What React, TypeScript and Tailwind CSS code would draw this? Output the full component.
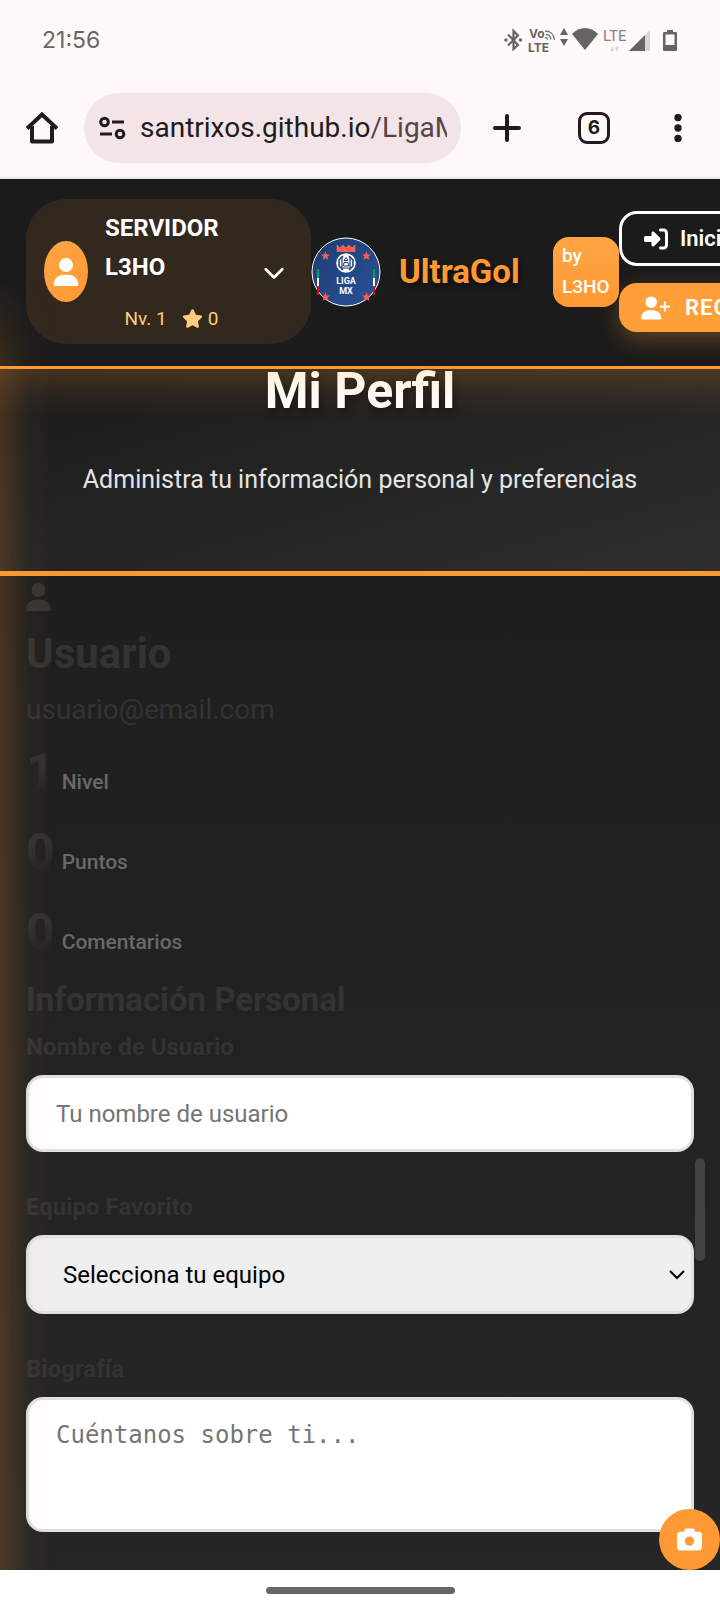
import type { ReactNode } from "react";
import {
  FaCamera,
  FaChevronDown,
  FaRightToBracket,
  FaStar,
  FaUser,
  FaUserPlus,
} from "react-icons/fa6";

function StatusIcons() {
  return (
    <svg width="176" height="32" viewBox="0 -2 176 32" aria-hidden="true" fill="#666461">
      <g fill="none" stroke="#666461" strokeWidth="2.2">
        <path d="M4 8.500 14 19 9.500 23V5L14 9.500 4 19.500" />
      </g>
      <circle cx="2" cy="14" r="1.700" />
      <circle cx="16.500" cy="14" r="1.700" />
      <text x="25" y="12" fontSize="12" fontWeight="700" fontFamily="Inter, sans-serif">Vo</text>
      <text x="24" y="26" fontSize="12" fontWeight="700" fontFamily="Inter, sans-serif">LTE</text>
      <g fill="none" stroke="#777" strokeWidth="1.300">
        <path d="M41 5c5 0 9 3 9.500 9M42 8.500c3 0 4.500 2 5 5M41 11.500c1.500 0 2.500 1 3 2" />
      </g>
      <path d="M60 2l4 7h-8zM60 20l4-7h-8z" />
      <path d="M68 8c7-8 19-8 26 0L81 24z" />
      <text x="99" y="15" fontSize="15" fill="#858381" fontFamily="Roboto, sans-serif">LTE</text>
      <path d="M108 21v4m-1.500-1.500 1.500 1.500 1.500-1.500M113 25v-4m-1.500 1.500 1.500-1.500 1.500 1.500" fill="none" stroke="#d5d0cf" strokeWidth="1.300" />
      <path d="M125 25 146 4v21z" fill="#dcd4d4" />
      <path d="M125 25 141 9v16z" />
      <path fillRule="evenodd" d="M163 4h6v2h3q1 0 1 1v17q0 1-1 1h-12q-1 0-1-1V7q0-1 1-1h3zM161.500 8.500v10.500h9V8.500z" />
    </svg>
  );
}

function BrowserBar() {
  return (
    <div className="border-b-2 border-[#f3e4e7] bg-[#fff8f8] text-[#221b1d]">
      <div className="flex h-20 items-center justify-between pr-[40px] pl-[42px]">
        <span className="font-[Inter,sans-serif] text-[23px] text-[#686563]">21:56</span>
        <StatusIcons />
      </div>
      <div className="flex items-start pt-[13px] pr-[38px] pb-[14px] pl-[26px]">
        <button type="button" aria-label="Inicio" className="mt-[19px] shrink-0">
          <svg width="32" height="32" viewBox="0 0 32 32" fill="none" stroke="#221b1d" strokeWidth="4" strokeLinejoin="round">
            <path d="M1 16.500 16 2.500l15 14" strokeWidth="4" strokeLinejoin="miter" />
            <path d="M6 14v15.500h20V14" />
          </svg>
        </button>
        <button
          type="button"
          aria-label="santrixos.github.io/LigaMX"
          className="ml-[26px] flex h-[70px] min-w-0 flex-1 items-center rounded-full bg-[#f3e4e7] pr-[14px] pl-[15px]"
        >
          <svg className="shrink-0" width="27" height="24" viewBox="0 0 27 24" fill="none" stroke="#221b1d" strokeWidth="3">
            <circle cx="5.500" cy="6" r="3.800" />
            <path d="M13 6h12M1 18h12" />
            <circle cx="21" cy="18" r="3.800" />
          </svg>
          <span className="ml-[14px] flex-1 overflow-hidden text-left font-[Roboto,sans-serif] text-[28px] whitespace-nowrap">
            santrixos.github.io<span className="text-[#544648]">/LigaM</span>
          </span>
        </button>
        <button type="button" aria-label="Nueva pestaña" className="mt-[21px] ml-[32px] shrink-0">
          <svg width="28" height="28" viewBox="0 0 28 28" stroke="#221b1d" strokeWidth="4" strokeLinecap="round">
            <path d="M14 2v24M2 14h24" />
          </svg>
        </button>
        <button
          type="button"
          aria-label="6 pestañas abiertas"
          className="mt-[19px] ml-[57px] flex size-8 shrink-0 items-center justify-center rounded-[9px] border-[3px] border-[#221b1d] font-[Inter,sans-serif] text-[19px] font-bold"
        >
          6
        </button>
        <button type="button" aria-label="Más opciones" className="mt-[21px] ml-[64px] shrink-0">
          <svg width="8" height="28" viewBox="0 0 8 28" fill="#221b1d">
            <circle cx="4" cy="3.500" r="3.700" />
            <circle cx="4" cy="14" r="3.700" />
            <circle cx="4" cy="24.500" r="3.700" />
          </svg>
        </button>
      </div>
    </div>
  );
}

const STAR = "M0-4.800 1.200-1.500 4.600-1.500 1.900.6 2.900 4 0 2-2.900 4-1.900.6-4.600-1.500-1.200-1.500z";

function LigaLogo() {
  return (
    <svg className="shrink-0" width="70" height="70" viewBox="0 0 70 70" role="img" aria-label="Liga MX">
      <defs>
        <linearGradient id="liga" x1="0" y1="0" x2="1" y2="1">
          <stop offset="0" stopColor="#1e3c72" />
          <stop offset="1" stopColor="#2a5298" />
        </linearGradient>
      </defs>
      <circle cx="35" cy="35" r="34" fill="url(#liga)" stroke="#fff" strokeWidth="1" />
      <path d="M26 8l3 3 3-3 3 3 3-3 3 3 3-3v6.500H26z" fill="#ff5a47" stroke="#ff8a7a" strokeWidth=".5" />
      <circle cx="35" cy="26" r="9.800" fill="#fff" />
      <path d="M32 19l-4 4v6l4 4M38 19l4 4v6l-4 4" fill="none" stroke="#1e3c72" strokeWidth="1.500" />
      <path d="M31 19.500v13M39 19.500v13" stroke="#1e3c72" strokeWidth="1.200" />
      <path d="M35 20.500l2 3h-4zM32.500 29l.5-3.500h4l.5 3.500zM32 31h6" fill="none" stroke="#1e3c72" strokeWidth="1" />
      <text x="35" y="46.500" textAnchor="middle" fill="#fff" fontSize="9" fontWeight="700" fontFamily="Roboto, sans-serif">LIGA</text>
      <text x="35" y="56.500" textAnchor="middle" fill="#fff" fontSize="9" fontWeight="700" fontFamily="Roboto, sans-serif">MX</text>
      {[[14.500, 19], [55.500, 19], [14.500, 60], [55.500, 60]].map(([x, y]) => (
        <path key={`${x}-${y}`} d={STAR} transform={`translate(${x} ${y})`} fill="#ff5f47" />
      ))}
      {[6, 62].map((x) => (
        <g key={x}>
          <path d={`M${x} 32h2v9h-2z`} fill="#00a650" />
          <path d={`M${x} 41h2v8h-2z`} fill="#fff" />
          <path d={`M${x} 49h2v9h-2z`} fill="#e30613" />
        </g>
      ))}
    </svg>
  );
}

function SiteHeader() {
  return (
    <header className="relative flex items-center overflow-hidden border-b-[3px] border-[#ff9933] bg-[#1b1b1b] pt-[20px] pb-[22px] pl-[26px] text-white">
      <button
        type="button"
        className="flex w-[285px] shrink-0 items-center rounded-[40px] bg-[#33281e] pt-[10px] pr-[26px] pb-[10px] pl-[18px] text-left"
      >
        <span className="flex h-[61px] w-[44px] shrink-0 items-center justify-center rounded-[50%] bg-linear-to-br from-[#ffa544] to-[#ff9933]">
          <FaUser className="size-[28px]" />
        </span>
        <span className="ml-[17px] w-[133px]">
          <span className="block text-[24px] leading-[39px] font-bold">SERVIDOR L3HO</span>
          <span className="mt-[16px] flex items-center justify-center text-[19px] leading-[31px] text-[#ffcc80]">
            Nv. 1
            <FaStar className="mr-[5px] ml-[15px] size-[21px]" />0
          </span>
        </span>
        <FaChevronDown className="ml-auto size-[22px]" />
      </button>
      <LigaLogo />
      <a
        href="#inicio"
        className="ml-[18px] w-[154px] shrink-0 text-[33px] font-bold text-[#ff9933] [text-shadow:2px_3px_5px_rgba(0,0,0,0.5)]"
      >
        UltraGol
      </a>
      <span className="w-[66px] shrink-0 rounded-[16px] bg-linear-to-b from-[#ffa544] to-[#ff9933] px-[9px] pt-[3px] pb-[5px] text-[19px] leading-[31px] font-medium">
        by L3HO
      </span>
      <div className="flex shrink-0 flex-col gap-[17px]">
        <button
          type="button"
          className="flex h-[55px] items-center gap-[12px] rounded-[18px] border-[3px] border-white px-[22px] text-[22px] font-semibold"
        >
          <FaRightToBracket className="size-[24px]" />
          Iniciar Sesión
        </button>
        <button
          type="button"
          className="flex h-[49px] items-center gap-[15px] rounded-[18px] bg-[#ff9f38] px-[22px] text-[22px] font-semibold tracking-wider shadow-[0_8px_22px_rgba(255,153,51,0.3)]"
        >
          <FaUserPlus className="h-[24px] w-[29px]" />
          REGISTRARSE
        </button>
      </div>
    </header>
  );
}

function Stat({ value, label }: { value: number; label: string }) {
  return (
    <div className="flex h-20 items-baseline gap-[7px]">
      <span className="bg-linear-to-b from-[#303030] from-40% to-[#222] to-80% bg-clip-text text-[50px] leading-[80px] font-bold text-transparent">
        {value}
      </span>
      <span className="text-[21px] leading-[34px] font-medium text-[#696969]">{label}</span>
    </div>
  );
}

function Field({ id, label, children }: { id: string; label: string; children: ReactNode }) {
  return (
    <div className="mb-[36px] flex flex-col">
      <label htmlFor={id} className="mb-[9px] text-[24px] leading-[38px] font-bold text-[#333]">
        {label}
      </label>
      {children}
    </div>
  );
}

function ProfilePage() {
  return (
    <main className="bg-linear-to-b from-[#1d1d1d] to-[#262626]">
      <section className="relative border-b-[5px] border-[#ff9933] bg-linear-to-br from-[#1b1b1b] to-[#2e2e2e] px-8 pb-[71px] text-center">
        <h1 className="text-[50px] leading-[44px] font-bold text-white [text-shadow:2px_4px_8px_rgba(0,0,0,0.5)]">
          Mi Perfil
        </h1>
        <p className="mt-[47px] text-[25px] leading-[40px] text-[#e5e5e5]">
          Administra tu información personal y preferencias
        </p>
        <div className="pointer-events-none absolute inset-x-0 top-0 h-12 bg-linear-to-b from-[#ff9933]/18 via-[#ff9933]/6 to-transparent" />
      </section>

      <div className="px-[26px] pt-[7px] pb-[2px]">
        <FaUser className="h-[28px] w-[25px] text-[#353433]" />
        <h2 className="mt-[9px] text-[42px] leading-[67px] font-bold text-[#333]">Usuario</h2>
        <p className="text-[28px] leading-[45px] text-[#333]">usuario@email.com</p>
        <Stat value={1} label="Nivel" />
        <Stat value={0} label="Puntos" />
        <Stat value={0} label="Comentarios" />

        <form onSubmit={(event) => event.preventDefault()}>
          <h3 className="text-[33px] leading-[56px] font-bold text-[#333]">Información Personal</h3>
          <Field id="nombre" label="Nombre de Usuario">
            <input
              id="nombre"
              type="text"
              placeholder="Tu nombre de usuario"
              className="h-[77px] w-full rounded-[17px] border-[3px] border-[#e0e0e0] bg-white px-[27px] text-[24px] text-black placeholder:text-[#757575]"
            />
          </Field>
          <Field id="equipo" label="Equipo Favorito">
            <div className="relative">
              <select
                id="equipo"
                className="block h-[79px] w-full appearance-none rounded-[17px] border-[3px] border-[#e0e0e0] bg-[#efefef] px-[34px] text-[24px] text-black"
              >
                <option>Selecciona tu equipo</option>
              </select>
              <svg
                className="pointer-events-none absolute top-[34px] right-[9px]"
                width="16"
                height="12"
                viewBox="0 0 16 12"
                fill="none"
                stroke="#000"
                strokeWidth="2"
              >
                <path d="M1 2l7 7 7-7" />
              </svg>
            </div>
          </Field>
          <Field id="bio" label="Biografía">
            <textarea
              id="bio"
              placeholder="Cuéntanos sobre ti..."
              className="h-[135px] w-full resize-none rounded-[17px] border-[3px] border-[#e0e0e0] bg-white px-[27px] py-[21px] font-['DejaVu_Sans_Mono',monospace] text-[24px] leading-[28px] text-black placeholder:text-[#757575]"
            />
          </Field>
        </form>
      </div>
    </main>
  );
}

export default function App() {
  return (
    <div className="flex min-h-screen flex-col bg-white font-[Roboto,sans-serif]">
      <BrowserBar />
      <div className="relative overflow-hidden">
        <SiteHeader />
        <ProfilePage />
        <div className="pointer-events-none absolute top-24 bottom-0 left-0 w-14 bg-linear-to-r from-[#ff9933]/18 via-[#ff9933]/4 via-50% to-transparent [mask-image:linear-gradient(to_bottom,transparent,black_120px)]" />
        <div className="pointer-events-none absolute right-[15px] bottom-[309px] h-[103px] w-[10px] rounded-full bg-[#434343]" />
        <button
          type="button"
          aria-label="Cambiar foto"
          className="absolute right-0 bottom-0 flex size-[61px] items-center justify-center rounded-full bg-[#ff9933] text-white"
        >
          <FaCamera className="size-[25px]" />
        </button>
      </div>
      <div className="flex flex-1 items-start justify-center pt-[17px] pb-[18px]">
        <div className="h-[7px] w-[189px] rounded-full bg-[#666]" />
      </div>
    </div>
  );
}
